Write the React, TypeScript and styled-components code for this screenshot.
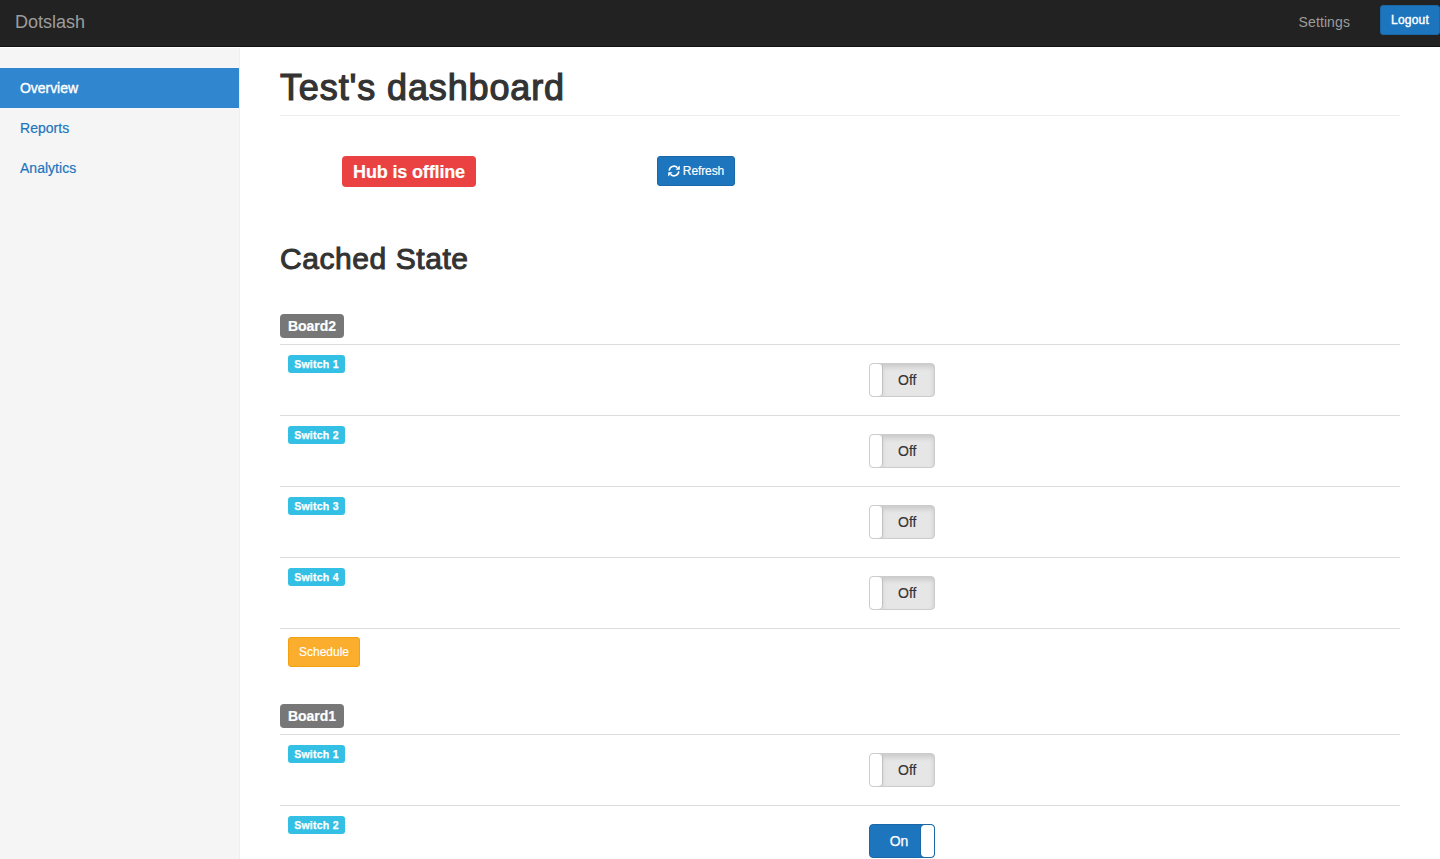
import React from 'react';
import styled, { createGlobalStyle, css } from 'styled-components';

const GlobalStyle = createGlobalStyle`
  *, *::before, *::after { box-sizing: border-box; }
  html, body { margin: 0; padding: 0; background: #fff; }
  body {
    height: 859px;
    overflow: hidden;
    color: #333;
    font: 14px/20px "Liberation Sans", Arial, sans-serif;
    -webkit-font-smoothing: antialiased;
  }
  a { color: #1d75bd; text-decoration: none; }
`;

const Page = styled.div`
  height: 859px;
  display: flex;
  flex-direction: column;
  overflow: hidden;
`;

const Navbar = styled.header`
  flex: none;
  height: 47px;
  display: flex;
  align-items: flex-start;
  background: #222;
  border-bottom: 1px solid #121212;
  color: #9d9d9d;
`;

const Brand = styled.a`
  padding: 12px 15px;
  font-size: 18px;
  letter-spacing: -0.02px;
  color: #9d9d9d;
`;

const NavLink = styled.a`
  margin-left: auto;
  padding: 12px 30px 0 0;
  letter-spacing: 0.1px;
  color: #9d9d9d;
`;

const tones = {
  primary: css`background: #1d75bd; border-color: #1a68a8;`,
  warning: css`background: #fbae2d; border-color: #f4a012;`,
};

const Button = styled.button<{ $tone: keyof typeof tones; $width: number; $strong?: boolean }>`
  width: ${p => p.$width}px;
  height: 30px;
  display: flex;
  align-items: center;
  justify-content: center;
  gap: 3px;
  padding: 0 0 1px;
  border: 1px solid;
  border-radius: 3px;
  color: #fff;
  font: 12px/18px "Liberation Sans", Arial, sans-serif;
  white-space: nowrap;
  -webkit-text-stroke: 0.15px #fff;
  ${p => tones[p.$tone]}
  ${p => p.$strong && css`letter-spacing: 0.2px; -webkit-text-stroke: 0.4px #fff;`}
`;

const RefreshButton = styled(Button)`
  letter-spacing: -0.1px;
`;

const LogoutSlot = styled.div`
  padding-top: 5px;
`;

const Body = styled.div`
  flex: 1;
  min-height: 0;
  display: flex;
`;

const Sidebar = styled.nav`
  flex: none;
  width: 240px;
  margin-top: 1px;
  padding-top: 20px;
  background: #f5f5f5;
  border-right: 1px solid #eee;
`;

const SideItem = styled.a<{ $active?: boolean }>`
  display: block;
  height: 40px;
  padding: 10px 20px;
  letter-spacing: 0.02px;
  -webkit-text-stroke: 0.2px currentColor;
  ${p => p.$active && css`
    background: #3087d0;
    color: #fff;
    letter-spacing: -0.05px;
    -webkit-text-stroke: 0.4px #fff;
  `}
`;

const Main = styled.main`
  flex: 1;
  padding: 20px 40px 0;
`;

const Title = styled.h1`
  height: 49px;
  margin: 0 0 40px;
  padding-top: 1px;
  border-bottom: 1px solid #eee;
  font-size: 36px;
  line-height: 40px;
  font-weight: 400;
  letter-spacing: 0.87px;
  -webkit-text-stroke: 1.2px #333;
`;

const StatusRow = styled.div`
  display: flex;
  height: 31px;
  padding-left: 62px;
  gap: 181px;
`;

const StatusLabel = styled.span`
  width: 134px;
  height: 31px;
  border-radius: 4px;
  background: #ea4242;
  color: #fff;
  font-size: 18px;
  line-height: 32px;
  font-weight: 700;
  letter-spacing: -0.15px;
  text-align: center;
  -webkit-text-stroke: 0.2px #fff;
`;

const Subtitle = styled.h2`
  margin: 54px 0 38px;
  height: 35px;
  font-size: 30px;
  line-height: 35px;
  font-weight: 400;
  letter-spacing: 0.57px;
  -webkit-text-stroke: 1px #333;
`;

const Board = styled.section`
  margin-bottom: 29px;
`;

const BoardLabel = styled.h4`
  width: 64px;
  height: 24px;
  margin: 0 0 6px;
  border-radius: 4px;
  background: #777;
  color: #fff;
  font-size: 14px;
  line-height: 24px;
  font-weight: 700;
  text-align: center;
  -webkit-text-stroke: 0.2px #fff;
`;

const Row = styled.div<{ $footer?: boolean }>`
  height: ${p => (p.$footer ? 47 : 71)}px;
  border-top: 1px solid #ddd;
  padding: ${p => (p.$footer ? '8px 8px 0' : '10px 8px 0')};
  display: grid;
  grid-template-columns: 581px 1fr;
  align-items: start;
`;

const SwitchLabel = styled.span`
  width: 57px;
  height: 18px;
  border-radius: 3px;
  background: #33c0e4;
  color: #fff;
  font-size: 10.5px;
  line-height: 18px;
  font-weight: 700;
  letter-spacing: 0.25px;
  text-align: center;
  -webkit-text-stroke: 0.25px #fff;
`;

const Toggle = styled.button<{ $on: boolean }>`
  width: 66px;
  height: 34px;
  margin-top: 8px;
  padding: 0;
  display: flex;
  flex-direction: ${p => (p.$on ? 'row' : 'row-reverse')};
  border: 1px solid ${p => (p.$on ? '#1a68a8' : '#ccc')};
  border-radius: 4px;
  overflow: hidden;
  background: ${p => (p.$on ? '#1d75bd' : '#e6e6e6')};
  color: ${p => (p.$on ? '#fff' : '#333')};
  font: 14px/32px "Liberation Sans", Arial, sans-serif;
`;

const ToggleText = styled.span<{ $on: boolean }>`
  flex: 1;
  height: 32px;
  text-align: center;
  ${p => p.$on
    ? css`padding-left: 7px; -webkit-text-stroke: 0.25px #fff;`
    : css`box-shadow: inset 0 3px 5px rgba(0, 0, 0, 0.125); padding-right: 1.5px; -webkit-text-stroke: 0.15px #333;`}
`;

const Handle = styled.span<{ $on: boolean }>`
  width: ${p => (p.$on ? 13 : 12)}px;
  height: 32px;
  background: #fff;
  border-radius: ${p => (p.$on ? '4px 3px 3px 4px' : '3px 4px 4px 3px')};
  box-shadow: 0 0 0 1px ${p => (p.$on ? '#1a68a8' : '#ccc')};
`;

const RefreshIcon = () => (
  <svg width="12" height="12" viewBox="0 0 12 12" fill="none" stroke="#fff" strokeWidth="1.5">
    <path d="M1.2 5.6A4.8 4.8 0 0 1 9.4 2.6" />
    <path d="M10.8 6.4A4.8 4.8 0 0 1 2.6 9.4" />
    <path d="M11.8 0.5V4.8H7.5Z" fill="#fff" stroke="none" />
    <path d="M0.2 11.5V7.2H4.5Z" fill="#fff" stroke="none" />
  </svg>
);

const boards = [
  { name: 'Board2', switches: [false, false, false, false], schedulable: true },
  { name: 'Board1', switches: [false, true], schedulable: false },
];

export default function App() {
  return (
    <Page>
      <GlobalStyle />
      <Navbar>
        <Brand>Dotslash</Brand>
        <NavLink>Settings</NavLink>
        <LogoutSlot>
          <Button $tone="primary" $width={60} $strong>Logout</Button>
        </LogoutSlot>
      </Navbar>
      <Body>
        <Sidebar>
          <SideItem $active>Overview</SideItem>
          <SideItem>Reports</SideItem>
          <SideItem>Analytics</SideItem>
        </Sidebar>
        <Main>
          <Title>Test's dashboard</Title>
          <StatusRow>
            <StatusLabel>Hub is offline</StatusLabel>
            <RefreshButton $tone="primary" $width={78}><RefreshIcon />Refresh</RefreshButton>
          </StatusRow>
          <Subtitle>Cached State</Subtitle>
          {boards.map(board => (
            <Board key={board.name}>
              <BoardLabel>{board.name}</BoardLabel>
              {board.switches.map((on, i) => (
                <Row key={i}>
                  <SwitchLabel>Switch {i + 1}</SwitchLabel>
                  <Toggle $on={on}>
                    <ToggleText $on={on}>{on ? 'On' : 'Off'}</ToggleText>
                    <Handle $on={on} />
                  </Toggle>
                </Row>
              ))}
              {board.schedulable && (
                <Row $footer>
                  <Button $tone="warning" $width={72}>Schedule</Button>
                </Row>
              )}
            </Board>
          ))}
        </Main>
      </Body>
    </Page>
  );
}
